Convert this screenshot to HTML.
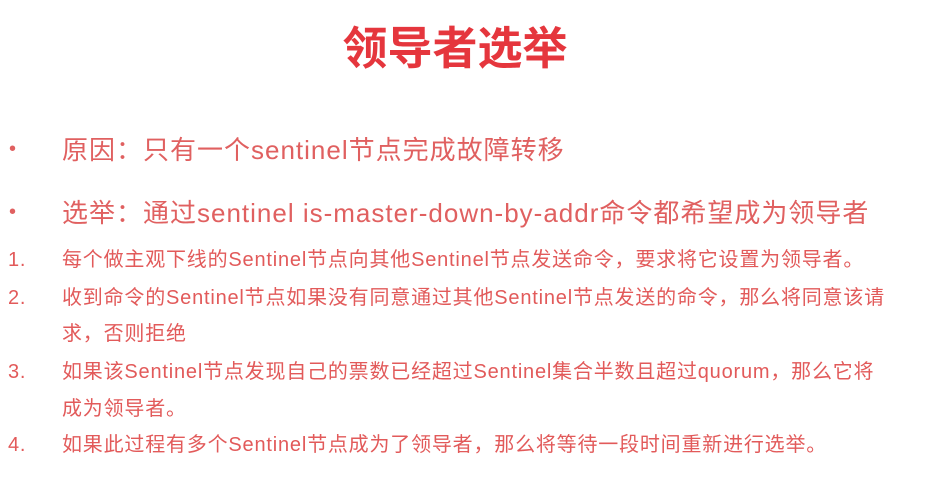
<!DOCTYPE html>
<html><head><meta charset="utf-8"><style>
html,body{margin:0;padding:0;background:#fff;width:942px;height:488px;overflow:hidden;position:relative;font-family:"Liberation Sans","Noto Sans CJK SC",sans-serif;}
div{position:absolute;white-space:nowrap;}
.t{left:0;width:910px;text-align:center;top:22px;font-size:45px;font-weight:bold;color:#e5363d;line-height:54px;}
.b{font-size:26px;color:#e06060;line-height:30px;letter-spacing:1px;}
.n{font-size:20px;color:#e25a5a;line-height:26px;letter-spacing:0.8px;}
.d{font-size:20px;color:#e06060;}
</style></head><body>
<div class="t">领导者选举</div>
<div class="d" style="left:9px;top:138px">•</div>
<div class="b" style="left:62px;top:135px">原因：只有一个sentinel节点完成故障转移</div>
<div class="d" style="left:9px;top:201px">•</div>
<div class="b" style="left:62px;top:198px">选举：通过sentinel is-master-down-by-addr命令都希望成为领导者</div>
<div class="n" style="left:8px;top:247px">1.</div>
<div class="n" style="left:62px;top:247px">每个做主观下线的Sentinel节点向其他Sentinel节点发送命令，要求将它设置为领导者。</div>
<div class="n" style="left:8px;top:285px">2.</div>
<div class="n" style="left:62px;top:285px">收到命令的Sentinel节点如果没有同意通过其他Sentinel节点发送的命令，那么将同意该请</div>
<div class="n" style="left:62px;top:321px">求，否则拒绝</div>
<div class="n" style="left:8px;top:359px">3.</div>
<div class="n" style="left:62px;top:359px">如果该Sentinel节点发现自己的票数已经超过Sentinel集合半数且超过quorum，那么它将</div>
<div class="n" style="left:62px;top:396px">成为领导者。</div>
<div class="n" style="left:8px;top:432px">4.</div>
<div class="n" style="left:62px;top:432px">如果此过程有多个Sentinel节点成为了领导者，那么将等待一段时间重新进行选举。</div>
</body></html>
